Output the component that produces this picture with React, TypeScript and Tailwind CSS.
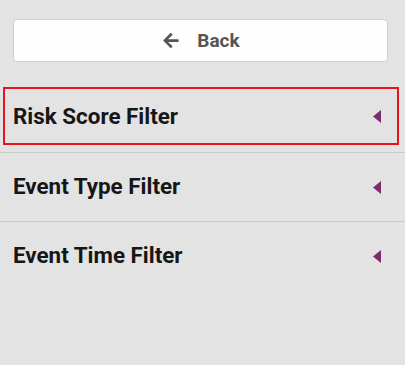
const Caret = () => (
  <svg width="8" height="13" viewBox="0 0 8 13" className="shrink-0">
    <polygon points="8,0 8,13 0,6.5" fill="#7b2c6b" />
  </svg>
);

const filters = ["Risk Score Filter", "Event Type Filter", "Event Time Filter"];

export default function App() {
  return (
    <div
      className="w-[405px] h-[365px] bg-[#e3e3e3] pt-[19px]"
      style={{ fontFamily: "Roboto, 'Liberation Sans', sans-serif" }}
    >
      <div className="pl-[13px] pr-[17px]">
        <button className="w-full h-[43px] bg-[#fefefe] border border-[#cfcfcf] rounded-[4px] flex items-center justify-center gap-[18px] pl-[2px] text-[#555555]">
          <svg width="16" height="15" viewBox="0 37 448 437" fill="currentColor">
            <path d="M257.5 445.1l-22.2 22.2c-9.4 9.4-24.6 9.4-33.9 0L7 273c-9.4-9.4-9.4-24.6 0-33.9L201.4 44.7c9.4-9.4 24.6-9.4 33.9 0l22.2 22.2c9.5 9.5 9.3 25-.4 34.3L136.6 216H424c13.3 0 24 10.7 24 24v32c0 13.3-10.7 24-24 24H136.6l120.5 114.8c9.8 9.3 10 24.8.4 34.3z" />
          </svg>
          <span className="text-[19px] font-bold leading-none">Back</span>
        </button>
      </div>

      <div className="mt-[22px]">
        <div className="pt-[3px] pb-[7px] pl-[3px] pr-[6px] border-b border-[#cacaca]">
          <div className="h-[58px] border-2 border-[#e8141f] flex items-center justify-between pl-2 pr-[16px]">
            <span className="text-[22.4px] font-bold text-[#161616] mt-[2px]">{filters[0]}</span>
            <Caret />
          </div>
        </div>
        {filters.slice(1).map((f, i) => (
          <div
            key={f}
            className={
              i === 0
                ? "h-[69px] flex items-center justify-between pl-[13px] pr-[24px] border-b border-[#cacaca]"
                : "h-[68px] flex items-center justify-between pl-[13px] pr-[24px]"
            }
          >
            <span className="text-[22.4px] font-bold text-[#161616]">{f}</span>
            <Caret />
          </div>
        ))}
      </div>
    </div>
  );
}
